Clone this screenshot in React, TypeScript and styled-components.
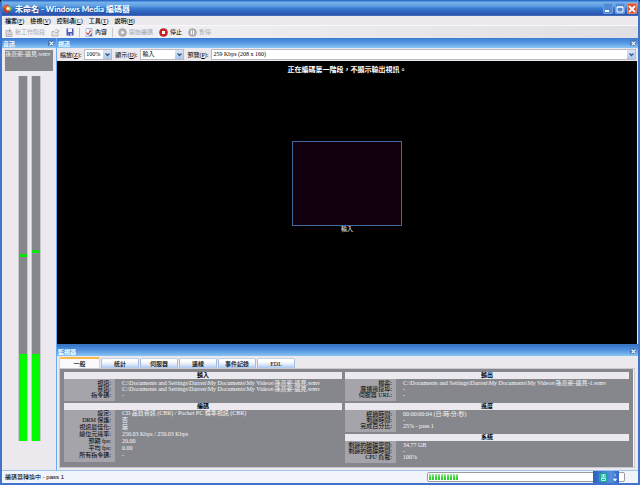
import React, { useState } from "react";
import styled, { createGlobalStyle } from "styled-components";

const GlobalStyle = createGlobalStyle`
  * { box-sizing: border-box; }
  body {
    margin: 0;
    background: #000;
    font: 6px/8px "Liberation Serif", "Noto Sans CJK TC", serif;
    color: #000;
  }
  button, select { font: inherit; color: inherit; margin: 0; padding: 0; border: 0; background: none; }
`;

const Window = styled.div`
  display: flex;
  flex-direction: column;
  min-height: 100vh;
  border: 2px solid #4173cb;
  border-top: 0;
  border-radius: 3px 3px 0 0;
  background: #ebe9ed;
  overflow: hidden;
`;

const TitleBar = styled.header`
  display: flex;
  align-items: center;
  gap: 2px;
  height: 16px;
  padding: 1px 1px 0 1px;
  background: linear-gradient(#2f6fcb 0, #2f6fcb 1px, #78b4ea 2px, #5f9fe2 6px, #3b80d3 8px, #3269c3 11px, #2950ae 15px, #5f82c8 16px);
  color: #fff;
`;

const Title = styled.h1`
  flex: 1;
  margin: 0;
  font: 700 8px/12px Lato, "Noto Sans CJK TC", sans-serif;
  white-space: nowrap;
  text-shadow: 1px 1px 0 #2450a0;
`;

const WindowButtons = styled.div`
  display: flex;
  gap: 2px;
`;

const WindowButton = styled.button<{ $close?: boolean }>`
  display: grid;
  place-items: center;
  width: 10px;
  height: 11px;
  border: 1px solid ${(p) => (p.$close ? "#e58b72" : "#6d9fe2")};
  border-radius: 1px;
  background: ${(p) => (p.$close ? "#dc4f2f" : "#4f88d5")};
`;

const MenuBar = styled.nav`
  display: flex;
  align-items: center;
  gap: 6px;
  height: 10px;
  padding: 0 3px;
  border-bottom: 1px solid #f8f7f9;
`;

const MenuItem = styled.button`
  line-height: 8px;
  font-weight: 500;
  white-space: nowrap;
`;

const Toolbar = styled.div`
  display: flex;
  align-items: center;
  gap: 6px;
  height: 12px;
  padding: 0 3px;
  background: linear-gradient(90deg, #f5f4f6, #e0dfe3);
`;

const ToolButton = styled.button`
  display: flex;
  align-items: center;
  gap: 2px;
  height: 10px;
  white-space: nowrap;
  &:disabled { color: #a9a8ae; }
`;

const Divider = styled.span`
  width: 1px;
  height: 9px;
  margin: 0 -1px;
  background: #c6c5cb;
`;

const Workspace = styled.div`
  display: flex;
  flex: 1;
  border-bottom: 1px solid #9cc3ec;
`;

const AudioPanel = styled.aside`
  display: flex;
  flex-direction: column;
  width: 54px;
`;

const MainColumn = styled.main`
  display: flex;
  flex: 1;
  flex-direction: column;
  min-width: 0;
  border-left: 1px solid #6aaaf0;
`;

const PanelHeader = styled.div`
  display: flex;
  align-items: center;
  justify-content: space-between;
  height: 10px;
  padding: 0 2px 0 1px;
  background: linear-gradient(#3a7cd2, #5899e2 5px, #8ac6f2);
  color: #fff;
`;

const PanelTitle = styled.h2`
  margin: 0;
  font: 700 6px/9px "Noto Sans CJK TC", sans-serif;
`;

const CloseButton = styled.button`
  display: grid;
  place-items: center;
  width: 6px;
  height: 6px;
  background: #4379bd;
`;

const SourceName = styled.div`
  height: 21px;
  margin: 2px 3px 0;
  background: #86878c;
  color: #f2f2f4;
  line-height: 8px;
  white-space: nowrap;
  overflow: hidden;
`;

const Meters = styled.div`
  display: flex;
  flex: 1;
  justify-content: center;
  gap: 3px;
  margin: 5px 0 29px;
`;

const Meter = styled.div`
  display: flex;
  flex-direction: column;
  width: 10px;
  border: 1px solid #c9c8cd;
  border-width: 0 1px;
  background: #86878c;
`;

const MeterSpace = styled.span<{ $grow: number }>`
  flex: ${(p) => p.$grow} 1 0;
`;

const MeterPeak = styled.span`
  height: 3px;
  background: #0be20d;
`;

const MeterLevel = styled.span`
  flex: 87 1 0;
  background: #00fa00;
`;

const ViewControls = styled.div`
  display: flex;
  align-items: center;
  gap: 3px;
  height: 13px;
  padding: 0 2px 0 3px;
`;

const ControlLabel = styled.label`
  white-space: nowrap;
`;

const SelectBox = styled.div<{ $width?: number }>`
  position: relative;
  flex: ${(p) => (p.$width ? `0 0 ${p.$width}px` : "1 1 0")};
  height: 11px;
  border: 1px solid #bcbac2;
  background: #fff;
`;

const Select = styled.select`
  display: block;
  width: 100%;
  height: 9px;
  padding: 0 9px 0 1px;
  appearance: none;
  line-height: 9px;
`;

const SelectArrow = styled.span`
  position: absolute;
  top: 0;
  right: 0;
  display: grid;
  place-items: center;
  width: 8px;
  height: 9px;
  background: linear-gradient(#dbe9fa, #aac6ea);
  pointer-events: none;
`;

const VideoStage = styled.section`
  display: flex;
  flex: 1;
  flex-direction: column;
  align-items: center;
  margin-right: 1px;
  padding-top: 5px;
  background: #000;
  color: #fff;
`;

const StageMessage = styled.p`
  margin: 0;
  font-size: 7px;
  line-height: 9px;
  font-weight: 700;
`;

const Preview = styled.figure`
  width: 110px;
  margin: 66px 0 0;
  text-align: center;
`;

const PreviewFrame = styled.div`
  height: 85px;
  border: 1px solid #42699f;
  background: #12000f;
`;

const Caption = styled.figcaption`
  line-height: 7px;
`;

const Monitor = styled.section`
  border-top: 2px solid #3a76c8;
`;

const Tabs = styled.div`
  display: flex;
  align-items: flex-end;
  gap: 1px;
  height: 12px;
  padding: 0 2px;
`;

const Tab = styled.button<{ $active: boolean }>`
  width: ${(p) => (p.$active ? 41 : 38)}px;
  height: ${(p) => (p.$active ? 11 : 10)}px;
  border: 1px solid ${(p) => (p.$active ? "#d4d4dc" : "#a8bcdc")};
  border-top: ${(p) => (p.$active ? "2px solid #f8b84a" : "1px solid #c5d0e2")};
  border-bottom: 0;
  border-radius: 2px 2px 0 0;
  background: ${(p) => (p.$active ? "#fafafc" : "linear-gradient(#fff 2px, #e5edf9 5px, #a9c9f1)")};
  font-weight: 500;
  line-height: 8px;
`;

const TabPanel = styled.div`
  margin: 0 3px 2px 2px;
  border: 1px solid #f6f6f8;
  outline: 1px solid #c9c8ce;
  outline-offset: -1px;
  padding: 3px 4px 4px;
  border-right-width: 2px;
  background: #86878c;
`;

const Columns = styled.div`
  display: grid;
  grid-template-columns: 278fr 284fr;
  gap: 3px;
`;

const Column = styled.div`
  display: flex;
  flex-direction: column;
  gap: 2px;
`;

const InfoTable = styled.table<{ $row: number; $top: number }>`
  width: 100%;
  border-collapse: separate;
  border-spacing: 0;
  line-height: ${(p) => p.$row}px;

  caption {
    height: 7px;
    background: #ebe9ed;
    font-weight: 700;
    line-height: 7px;
  }
  th, td {
    height: ${(p) => p.$row}px;
    padding: 0;
    white-space: nowrap;
  }
  th {
    width: 51px;
    padding-right: 4px;
    background: #a5a4aa;
    font-weight: 400;
    text-align: right;
  }
  td {
    padding-left: 7px;
    color: #f7f7f9;
  }
  tr:first-child > * { padding-top: ${(p) => p.$top}px; }
  tr:last-child > * { padding-bottom: 3px; }
`;

const StatusBar = styled.footer`
  display: flex;
  align-items: center;
  justify-content: space-between;
  height: 12px;
  padding: 0 13px 0 3px;
  background: #f1f4fa;
`;

const StatusText = styled.span`
  font-family: "Liberation Sans", "Noto Sans CJK TC", sans-serif;
`;

const ProgressTrack = styled.div`
  position: relative;
  display: flex;
  gap: 1px;
  width: 32%;
  height: 10px;
  padding: 1px;
  border: 1px solid #9b9a9e;
  border-radius: 2px;
  background: #fff;
`;

const ProgressBlock = styled.span`
  width: 2px;
  background: linear-gradient(#9cec9c, #2fd22f 4px, #2fd22f 6px, #72e272);
`;

const LanguageBar = styled.button`
  position: absolute;
  top: -2px;
  right: 5px;
  display: flex;
  align-items: center;
  justify-content: flex-end;
  gap: 5px;
  width: 26px;
  height: 13px;
  padding-right: 2px;
  background: linear-gradient(90deg, #2c62bd, #5591df 70%, #2f68c5);
`;

const CloseGlyph = ({ size }: { size: number }) => (
  <svg width={size} height={size} viewBox="0 0 8 8" aria-hidden="true">
    <path d="M1 1l6 6M7 1L1 7" stroke="#fff" strokeWidth="1.8" />
  </svg>
);

const LogoIcon = () => (
  <svg width="10" height="10" viewBox="0 0 20 20" aria-hidden="true">
    <path d="M9 1L18 9 11 19 1 11z" fill="#2454ae" />
    <path d="M2 4q5-5 10 0L8 10 2 9z" fill="#ea532e" />
    <path d="M12 4l6 5-4 6-6-5z" fill="#8fbd3c" />
    <path d="M2 10l6 1 4 4-3 4-7-5z" fill="#d93523" />
    <circle cx="10" cy="9" r="4" fill="#ffd35a" />
    <path d="M8 6l5 3-5 3z" fill="#fff" />
  </svg>
);

const SessionIcon = () => (
  <svg width="8" height="9" viewBox="0 0 16 18" aria-hidden="true">
    <path d="M2 5h8l4 4v8H2z" fill="#dcdbe0" stroke="#a5a4aa" strokeWidth="1.5" />
    <path d="M9 1v8M5 5h8M5 13h6" stroke="#aaa9af" strokeWidth="2" />
  </svg>
);

const OpenIcon = () => (
  <svg width="9" height="9" viewBox="0 0 18 18" aria-hidden="true">
    <path d="M2 7h5l2 2h5v7H2z" fill="#e3e2e6" stroke="#a9a8ae" strokeWidth="1.5" />
    <path d="M8 4q5-4 7 3M12 6l3 2 2-4" fill="none" stroke="#a9a8ae" strokeWidth="1.5" />
  </svg>
);

const SaveIcon = () => (
  <svg width="8" height="8" viewBox="0 0 16 16" aria-hidden="true">
    <path d="M1 1h14v14H1z" fill="#5059b4" />
    <path d="M4 1h8v7H4z" fill="#f3f4fb" />
    <path d="M4 11h8v4H4z" fill="#c3c7e6" />
    <path d="M5 11h3v4H5z" fill="#353e90" />
  </svg>
);

const PropertiesIcon = () => (
  <svg width="8" height="9" viewBox="0 0 16 18" aria-hidden="true">
    <path d="M2 1h12v16H2z" fill="#fff" stroke="#8fabdc" strokeWidth="1.5" />
    <path d="M7 4h6M8 7h4" stroke="#94aedb" strokeWidth="1.5" />
    <path d="M3 9l3 4 6-8" fill="none" stroke="#d9452d" strokeWidth="2.4" />
    <path d="M7 16l7-6v6z" fill="#4a76c6" />
  </svg>
);

const RoundIcon = ({ kind }: { kind: "play" | "stop" | "pause" }) => (
  <svg width="9" height="9" viewBox="0 0 18 18" aria-hidden="true">
    <circle cx="9" cy="9" r="8" fill={kind === "stop" ? "#cc2422" : "#b1b0b5"} stroke={kind === "stop" ? "#9d1719" : "#a09fa5"} />
    {kind === "play" && <path d="M7 5l6 4-6 4z" fill="#fff" />}
    {kind === "stop" && <path d="M6 6h6v6H6z" fill="#fff" />}
    {kind === "pause" && <path d="M7 5v8M11 5v8" stroke="#fff" strokeWidth="2" />}
  </svg>
);

const menus: [string, string][] = [["檔案", "F"], ["檢視", "V"], ["控制項", "C"], ["工具", "T"], ["說明", "H"]];
const tabNames = ["一般", "統計", "伺服器", "連線", "事件記錄", "EDL"];
const source = "C:\\Documents and Settings\\Darren\\My Documents\\My Videos\\孫燕姿-遇見";

type InfoProps = { title: string; rows: [string, string][]; row?: number; top?: number };

const Info = ({ title, rows, row = 6, top = 1 }: InfoProps) => (
  <InfoTable $row={row} $top={top}>
    <caption>{title}</caption>
    <tbody>
      {rows.map(([label, value]) => (
        <tr key={label}>
          <th scope="row">{label}:</th>
          <td>{value}</td>
        </tr>
      ))}
    </tbody>
  </InfoTable>
);

type DropDownProps = { id: string; label: string; accel: string; value: string; width?: number };

const DropDown = ({ id, label, accel, value, width }: DropDownProps) => (
  <>
    <ControlLabel htmlFor={id}>{label}(<u>{accel}</u>):</ControlLabel>
    <SelectBox $width={width}>
      <Select id={id} defaultValue={value}>
        <option>{value}</option>
      </Select>
      <SelectArrow>
        <svg width="5" height="4" viewBox="0 0 10 8" aria-hidden="true">
          <path d="M1 1l4 4 4-4" fill="none" stroke="#40587f" strokeWidth="2.5" />
        </svg>
      </SelectArrow>
    </SelectBox>
  </>
);

export default function App() {
  const [active, setActive] = useState(0);
  return (
    <>
      <GlobalStyle />
      <Window>
        <TitleBar>
          <LogoIcon />
          <Title>未命名 - Windows Media 編碼器</Title>
          <WindowButtons>
            <WindowButton aria-label="最小化">
              <svg width="8" height="8" viewBox="0 0 8 8" aria-hidden="true"><path d="M1 6h4" stroke="#fff" strokeWidth="2" /></svg>
            </WindowButton>
            <WindowButton aria-label="最大化">
              <svg width="8" height="8" viewBox="0 0 8 8" aria-hidden="true"><path d="M1 7V2h6v5zM1 2h6" fill="none" stroke="#fff" /></svg>
            </WindowButton>
            <WindowButton $close aria-label="關閉"><CloseGlyph size={8} /></WindowButton>
          </WindowButtons>
        </TitleBar>
        <MenuBar>
          {menus.map(([name, accel]) => (
            <MenuItem key={name}>{name}(<u>{accel}</u>)</MenuItem>
          ))}
        </MenuBar>
        <Toolbar>
          <ToolButton disabled><SessionIcon />新工作階段</ToolButton>
          <ToolButton disabled aria-label="開啟"><OpenIcon /></ToolButton>
          <ToolButton aria-label="儲存"><SaveIcon /></ToolButton>
          <Divider />
          <ToolButton><PropertiesIcon />內容</ToolButton>
          <Divider />
          <ToolButton disabled><RoundIcon kind="play" />開始編碼</ToolButton>
          <ToolButton><RoundIcon kind="stop" />停止</ToolButton>
          <ToolButton disabled><RoundIcon kind="pause" />暫停</ToolButton>
        </Toolbar>
        <Workspace>
          <AudioPanel>
            <PanelHeader>
              <PanelTitle>音訊</PanelTitle>
              <CloseButton aria-label="關閉音訊"><CloseGlyph size={5} /></CloseButton>
            </PanelHeader>
            <SourceName>孫燕姿-遇見.wmv</SourceName>
            <Meters>
              {[178, 174].map((above) => (
                <Meter key={above}>
                  <MeterSpace $grow={above} />
                  <MeterPeak />
                  <MeterSpace $grow={275 - above} />
                  <MeterLevel />
                </Meter>
              ))}
            </Meters>
          </AudioPanel>
          <MainColumn>
            <PanelHeader>
              <PanelTitle>視訊</PanelTitle>
              <CloseButton aria-label="關閉視訊"><CloseGlyph size={5} /></CloseButton>
            </PanelHeader>
            <ViewControls>
              <DropDown id="zoom" label="縮放" accel="Z" value="100%" width={28} />
              <DropDown id="show" label="顯示" accel="D" value="輸入" width={44} />
              <DropDown id="preview" label="預覽" accel="P" value="259 Kbps (208 x 160)" />
            </ViewControls>
            <VideoStage>
              <StageMessage>正在編碼第一階段，不顯示輸出視訊。</StageMessage>
              <Preview>
                <PreviewFrame />
                <Caption>輸入</Caption>
              </Preview>
            </VideoStage>
            <Monitor>
              <PanelHeader>
                <PanelTitle>監視器</PanelTitle>
                <CloseButton aria-label="關閉監視器"><CloseGlyph size={5} /></CloseButton>
              </PanelHeader>
              <Tabs role="tablist">
                {tabNames.map((name, i) => (
                  <Tab key={name} role="tab" aria-selected={i === active} $active={i === active} onClick={() => setActive(i)}>
                    {name}
                  </Tab>
                ))}
              </Tabs>
              <TabPanel role="tabpanel">
                <Columns>
                  <Column>
                    <Info title="輸入" rows={[["視訊", `${source}.wmv`], ["音訊", `${source}.wmv`], ["指令碼", "-"]]} />
                    <Info
                      title="編碼"
                      row={7}
                      top={0}
                      rows={[
                        ["設定", "CD 品質音訊 (CBR) / Pocket PC 標準視訊 (CBR)"],
                        ["DRM 保護", "否"],
                        ["視訊最佳化", "無"],
                        ["總位元速率", "250.03 Kbps / 250.03 Kbps"],
                        ["預期 fps", "20.00"],
                        ["平均 fps", "0.00"],
                        ["所有指令碼", "-"],
                      ]}
                    />
                  </Column>
                  <Column>
                    <Info title="輸出" rows={[["檔案", `${source}-1.wmv`], ["廣播連接埠", "-"], ["伺服器 URL", "-"]]} />
                    <Info title="進度" rows={[["經過時間", "00:00:00:04  (日:時:分:秒)"], ["剩餘時間", "-"], ["完成百分比", "25% - pass 1"]]} />
                    <Info title="系統" rows={[["剩餘的磁碟空間", "34.77 GB"], ["剩餘的磁碟時間", "-"], ["CPU 負載", "100%"]]} />
                  </Column>
                </Columns>
              </TabPanel>
            </Monitor>
          </MainColumn>
        </Workspace>
        <StatusBar>
          <StatusText>編碼器轉換中 - pass 1</StatusText>
          <ProgressTrack role="progressbar" aria-label="編碼進度" aria-valuenow={25}>
            {Array.from({ length: 10 }, (_, i) => <ProgressBlock key={i} />)}
            <LanguageBar aria-label="輸入法">
              <svg width="9" height="9" viewBox="0 0 18 18" aria-hidden="true">
                <rect width="18" height="18" rx="2" fill="#1ba7a0" />
                <path d="M4 4h10M4 8h10M9 2v6M5 11h8v4H5z" fill="none" stroke="#e4fffb" strokeWidth="1.6" />
              </svg>
              <svg width="4" height="9" viewBox="0 0 8 18" aria-hidden="true">
                <path d="M2 4h4M1 12h6l-3 4z" fill="#fff" stroke="#fff" strokeWidth="1.5" />
              </svg>
            </LanguageBar>
          </ProgressTrack>
        </StatusBar>
      </Window>
    </>
  );
}
